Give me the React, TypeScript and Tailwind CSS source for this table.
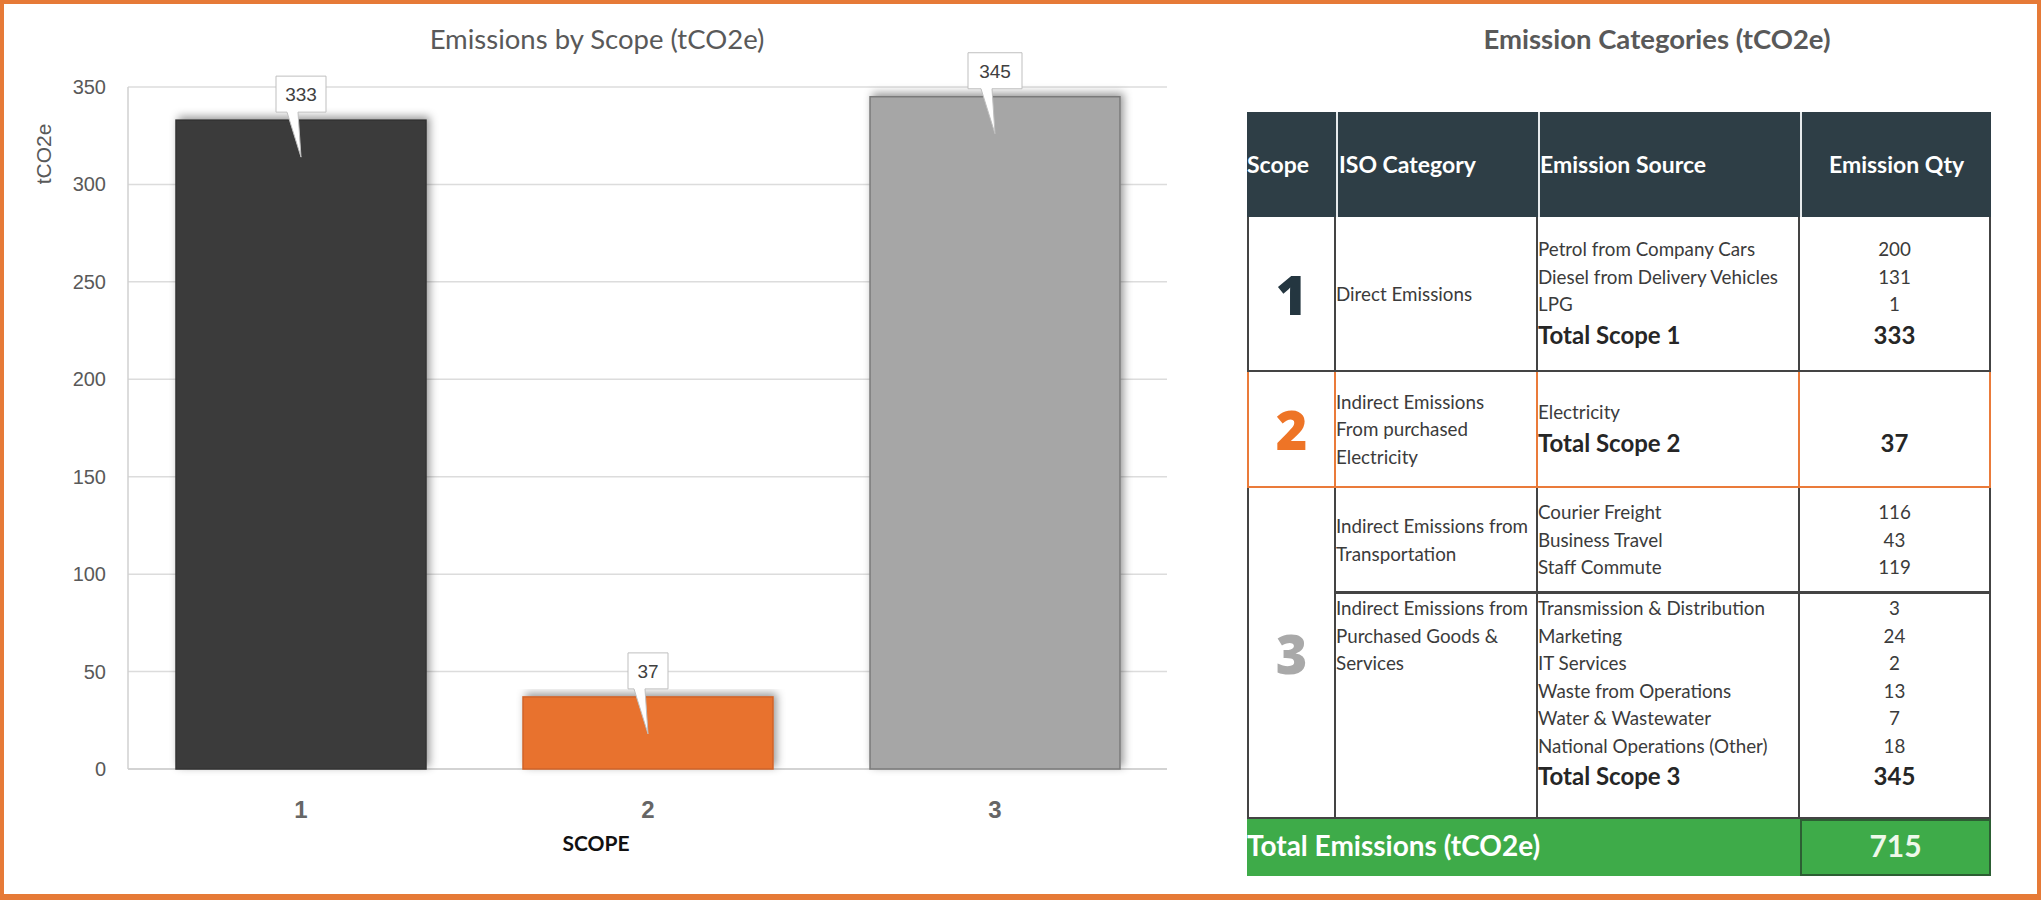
const ticks = [0, 50, 100, 150, 200, 250, 300, 350];
const yOf = (v: number) => 769 - (v / 350) * 682;

const bars = [
  { label: "1", value: 333, x: 176, fill: "#3a3a3a", stroke: "#333333", boxW: 50 },
  { label: "2", value: 37, x: 523, fill: "#e8722f", stroke: "#cf6328", boxW: 40 },
  { label: "3", value: 345, x: 870, fill: "#a6a6a6", stroke: "#7a7a7a", boxW: 54 },
];

const ScopeChart = () => {
  return (
    <svg width="1216" height="890" viewBox="4 4 1216 890" className="shrink-0">
      <defs>
        <filter id="barShadow" x="-10%" y="-10%" width="125%" height="120%">
          <feDropShadow dx="3" dy="-3" stdDeviation="4" floodColor="#000" floodOpacity="0.4" />
        </filter>
      </defs>

      <text x="597" y="49" textAnchor="middle" className="font-['Lato',sans-serif] text-[27.5px]" fill="#595959">
        Emissions by Scope (tCO2e)
      </text>

      <text transform="translate(51,154) rotate(-90)" textAnchor="middle" className="font-['Liberation_Sans',sans-serif] text-[21px]" fill="#595959">
        tCO2e
      </text>

      {ticks.map((t) => (
        <g key={t}>
          <line x1="128" x2="1167" y1={yOf(t)} y2={yOf(t)} stroke={t === 0 ? "#c4c4c4" : "#dcdcdc"} strokeWidth="1.5" />
          <text x="106" y={yOf(t) + 7} textAnchor="end" className="font-['Liberation_Sans',sans-serif] text-[20px]" fill="#595959">
            {t}
          </text>
        </g>
      ))}
      <line x1="128" x2="128" y1="87" y2="769" stroke="#d0d0d0" strokeWidth="1.5" />

      {bars.map((b) => {
        const top = yOf(b.value);
        const cx = b.x + 125;
        const bx0 = cx - b.boxW / 2;
        const bx1 = cx + b.boxW / 2;
        const by1 = top - 8;
        const by0 = by1 - 36;
        const tip = by1 + 45;
        return (
          <g key={b.label}>
            <rect x={b.x} y={top} width="250" height={769 - top} fill={b.fill} stroke={b.stroke} strokeWidth="1.5" filter="url(#barShadow)" />
            <path
              d={`M${bx0},${by0} H${bx1} V${by1} H${cx - 3} L${cx},${tip} L${cx - 14},${by1} H${bx0} Z`}
              fill="#fff"
              stroke="#bfbfbf"
              strokeWidth="1"
            />
            <text x={cx} y={by0 + 25} textAnchor="middle" className="font-['Liberation_Sans',sans-serif] text-[19px]" fill="#404040">
              {b.value}
            </text>
            <text x={cx} y="818" textAnchor="middle" className="font-['Liberation_Sans',sans-serif] text-[24px] font-bold" fill="#666666">
              {b.label}
            </text>
          </g>
        );
      })}

      <text x="596" y="851" textAnchor="middle" className="font-['Lato',sans-serif] text-[21px] font-bold" fill="#111">
        SCOPE
      </text>
    </svg>
  );
};

const Line = ({ children }: { children?: React.ReactNode }) => (
  <div className="leading-[27.5px] text-[18.8px] h-[27.5px] whitespace-nowrap">{children}</div>
);

const Total = ({ children }: { children: React.ReactNode }) => (
  <div className="leading-[34px] text-[24px] font-bold text-[#262626] whitespace-nowrap">{children}</div>
);

const Digit = ({ children, color }: { children: React.ReactNode; color: string }) => (
  <span className={`font-['Open_Sans',sans-serif] text-[54px] font-extrabold leading-none ${color}`}>{children}</span>
);

const CategoryTable = () => {
  const dark = "border-[#444]";
  const orange = "border-[#ea7b3a]";
  return (
    <div className="flex-1 pl-[27px] font-['Lato',sans-serif] text-[#3b3b3b]">
      <h2 className="w-[744px] ml-[38px] h-[108px] pt-[20px] leading-[30px] text-center text-[27.5px] font-bold text-[#595959]">
        Emission Categories (tCO2e)
      </h2>

      <div className="w-[744px]">
        <div className="grid grid-cols-[89px_202px_262px_191px] h-[105px] bg-[#2e3e46] text-white text-[23px] font-bold">
          <div className="flex items-center">Scope</div>
          <div className="flex items-center border-l-2 border-[#e6eaec] pl-[1px]">ISO Category</div>
          <div className="flex items-center border-l-2 border-[#e6eaec]">Emission Source</div>
          <div className="flex items-center justify-center border-l-2 border-[#e6eaec]">Emission Qty</div>
        </div>

        <div className="grid grid-cols-[89px_202px_262px_191px] h-[155px]">
          <div className={`flex items-center justify-center border-l-2 border-r-2 border-b-2 ${dark}`}>
            <Digit color="text-[#243640]">1</Digit>
          </div>
          <div className={`flex flex-col justify-center border-r-2 border-b-2 ${dark}`}>
            <Line>Direct Emissions</Line>
          </div>
          <div className={`flex flex-col justify-center border-r-2 border-b-2 ${dark}`}>
            <Line>Petrol from Company Cars</Line>
            <Line>Diesel from Delivery Vehicles</Line>
            <Line>LPG</Line>
            <Total>Total Scope 1</Total>
          </div>
          <div className={`flex flex-col justify-center items-center border-r-2 border-b-2 ${dark}`}>
            <Line>200</Line>
            <Line>131</Line>
            <Line>1</Line>
            <Total>333</Total>
          </div>
        </div>

        <div className="grid grid-cols-[89px_202px_262px_191px] h-[116px]">
          <div className={`flex items-center justify-center border-l-2 border-r-2 border-b-2 ${orange}`}>
            <Digit color="text-[#ee7426]">2</Digit>
          </div>
          <div className={`flex flex-col justify-center border-r-2 border-b-2 ${orange}`}>
            <Line>Indirect Emissions</Line>
            <Line>From purchased</Line>
            <Line>Electricity</Line>
          </div>
          <div className={`flex flex-col justify-center border-r-2 border-b-2 ${orange}`}>
            <Line>Electricity</Line>
            <Total>Total Scope 2</Total>
          </div>
          <div className={`flex flex-col justify-center items-center border-r-2 border-b-2 ${orange}`}>
            <Line />
            <Total>37</Total>
          </div>
        </div>

        <div className="grid grid-cols-[89px_202px_262px_191px] grid-rows-[106px_225px]">
          <div className={`row-span-2 flex items-center justify-center border-l-2 border-r-2 border-b-2 ${dark}`}>
            <Digit color="text-[#a9a9a9]">3</Digit>
          </div>
          <div className={`flex flex-col justify-center border-r-2 border-b-[3px] ${dark}`}>
            <Line>Indirect Emissions from</Line>
            <Line>Transportation</Line>
          </div>
          <div className={`flex flex-col justify-center border-r-2 border-b-[3px] ${dark}`}>
            <Line>Courier Freight</Line>
            <Line>Business Travel</Line>
            <Line>Staff Commute</Line>
          </div>
          <div className={`flex flex-col justify-center items-center border-r-2 border-b-[3px] ${dark}`}>
            <Line>116</Line>
            <Line>43</Line>
            <Line>119</Line>
          </div>

          <div className={`flex flex-col border-r-2 border-b-2 ${dark}`}>
            <Line>Indirect Emissions from</Line>
            <Line>Purchased Goods &amp;</Line>
            <Line>Services</Line>
          </div>
          <div className={`flex flex-col border-r-2 border-b-2 ${dark}`}>
            <Line>Transmission &amp; Distribution</Line>
            <Line>Marketing</Line>
            <Line>IT Services</Line>
            <Line>Waste from Operations</Line>
            <Line>Water &amp; Wastewater</Line>
            <Line>National Operations (Other)</Line>
            <Total>Total Scope 3</Total>
          </div>
          <div className={`flex flex-col items-center border-r-2 border-b-2 ${dark}`}>
            <Line>3</Line>
            <Line>24</Line>
            <Line>2</Line>
            <Line>13</Line>
            <Line>7</Line>
            <Line>18</Line>
            <Total>345</Total>
          </div>
        </div>

        <div className="grid grid-cols-[553px_191px] h-[57px] bg-[#3eab49]">
          <div className="flex items-center pb-[6px] text-white text-[28px] font-bold whitespace-nowrap">Total Emissions (tCO2e)</div>
          <div className="flex items-center justify-center pb-[5px] border-2 border-[#2c5e33] text-[30px] font-bold text-[#eef8ea]">
            715
          </div>
        </div>
      </div>
    </div>
  );
};

export default function App() {
  return (
    <div className="w-[2041px] h-[900px] border-4 border-b-[6px] border-[#e67a37] bg-white flex overflow-hidden">
      <ScopeChart />
      <CategoryTable />
    </div>
  );
}
